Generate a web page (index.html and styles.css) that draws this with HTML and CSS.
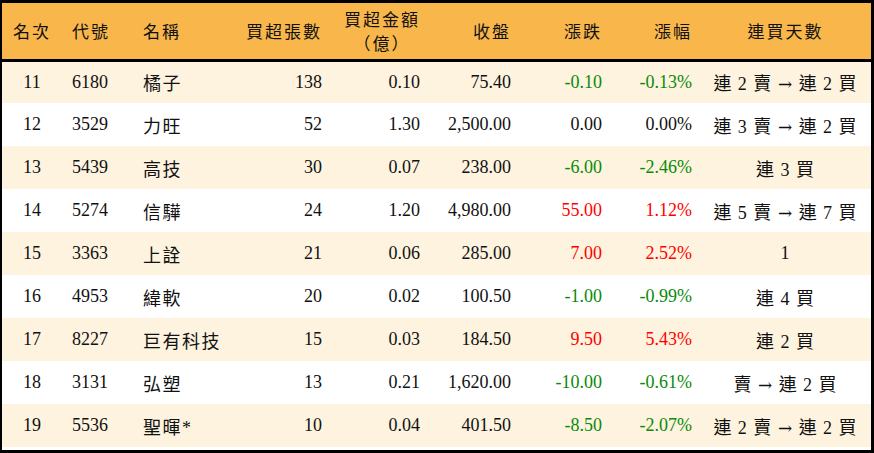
FILE: index.html
```html
<!DOCTYPE html>
<html lang="zh-Hant">
<head>
<meta charset="utf-8">
<title>買超排行</title>
<link rel="stylesheet" href="styles.css">
</head>
<body>
<div class="frame">
<table class="rank">
  <colgroup>
    <col class="c1"><col class="c2"><col class="c3"><col class="c4"><col class="c5"><col class="c6"><col class="c7"><col class="c8"><col class="c9">
  </colgroup>
  <thead>
    <tr>
      <th class="ctr">名次</th>
      <th class="lft code">代號</th>
      <th class="lft name">名稱</th>
      <th class="rgt">買超張數</th>
      <th class="rgt"><span class="two"><span class="ln">買超金額</span><span class="ln">（億）</span></span></th>
      <th class="rgt">收盤</th>
      <th class="rgt">漲跌</th>
      <th class="rgt">漲幅</th>
      <th class="ctr">連買天數</th>
    </tr>
  </thead>
  <tbody>
    <tr><td class="ctr">11</td><td class="lft code">6180</td><td class="lft name">橘子</td><td class="rgt">138</td><td class="rgt">0.10</td><td class="rgt">75.40</td><td class="rgt dn">-0.10</td><td class="rgt dn">-0.13%</td><td class="ctr days">連 2 賣 <span class="arr">→</span> 連 2 買</td></tr>
    <tr><td class="ctr">12</td><td class="lft code">3529</td><td class="lft name">力旺</td><td class="rgt">52</td><td class="rgt">1.30</td><td class="rgt">2,500.00</td><td class="rgt">0.00</td><td class="rgt">0.00%</td><td class="ctr days">連 3 賣 <span class="arr">→</span> 連 2 買</td></tr>
    <tr><td class="ctr">13</td><td class="lft code">5439</td><td class="lft name">高技</td><td class="rgt">30</td><td class="rgt">0.07</td><td class="rgt">238.00</td><td class="rgt dn">-6.00</td><td class="rgt dn">-2.46%</td><td class="ctr days">連 3 買</td></tr>
    <tr><td class="ctr">14</td><td class="lft code">5274</td><td class="lft name">信驊</td><td class="rgt">24</td><td class="rgt">1.20</td><td class="rgt">4,980.00</td><td class="rgt up">55.00</td><td class="rgt up">1.12%</td><td class="ctr days">連 5 賣 <span class="arr">→</span> 連 7 買</td></tr>
    <tr><td class="ctr">15</td><td class="lft code">3363</td><td class="lft name">上詮</td><td class="rgt">21</td><td class="rgt">0.06</td><td class="rgt">285.00</td><td class="rgt up">7.00</td><td class="rgt up">2.52%</td><td class="ctr days">1</td></tr>
    <tr><td class="ctr">16</td><td class="lft code">4953</td><td class="lft name">緯軟</td><td class="rgt">20</td><td class="rgt">0.02</td><td class="rgt">100.50</td><td class="rgt dn">-1.00</td><td class="rgt dn">-0.99%</td><td class="ctr days">連 4 買</td></tr>
    <tr><td class="ctr">17</td><td class="lft code">8227</td><td class="lft name">巨有科技</td><td class="rgt">15</td><td class="rgt">0.03</td><td class="rgt">184.50</td><td class="rgt up">9.50</td><td class="rgt up">5.43%</td><td class="ctr days">連 2 買</td></tr>
    <tr><td class="ctr">18</td><td class="lft code">3131</td><td class="lft name">弘塑</td><td class="rgt">13</td><td class="rgt">0.21</td><td class="rgt">1,620.00</td><td class="rgt dn">-10.00</td><td class="rgt dn">-0.61%</td><td class="ctr days">賣 <span class="arr">→</span> 連 2 買</td></tr>
    <tr><td class="ctr">19</td><td class="lft code">5536</td><td class="lft name">聖暉*</td><td class="rgt">10</td><td class="rgt">0.04</td><td class="rgt">401.50</td><td class="rgt dn">-8.50</td><td class="rgt dn">-2.07%</td><td class="ctr days">連 2 賣 <span class="arr">→</span> 連 2 買</td></tr>
  </tbody>
</table>
</div>
</body>
</html>
```

FILE: styles.css
```css
html, body {
  margin: 0;
  padding: 0;
  background: #ffffff;
}

.frame {
  width: 874px;
  height: 453px;
  box-sizing: border-box;
  border-top: 3px solid #000;
  border-left: 2px solid #000;
  border-right: 3px solid #000;
  border-bottom: 3px solid #000;
  overflow: hidden;
}

.rank {
  width: 869px;
  border-collapse: collapse;
  table-layout: fixed;
  font-family: "Liberation Serif", "Noto Sans CJK TC", serif;
  font-size: 18px;
  color: #111;
}

.c1 { width: 60px; }
.c2 { width: 68px; }
.c3 { width: 100px; }
.c4 { width: 100px; }
.c5 { width: 98px; }
.c6 { width: 91px; }
.c7 { width: 91px; }
.c8 { width: 90px; }
.c9 { width: 171px; }

.rank thead tr {
  background: #f9b74b;
  height: 57px;
}

.rank th {
  font-weight: 400;
  font-family: "Noto Sans CJK TC", serif;
  font-size: 17px;
  letter-spacing: 2px;
  padding: 0;
  border-bottom: 3px solid #000;
  white-space: nowrap;
  line-height: 22px;
}

.rank th.rgt {
  padding-right: 6px;
}

.two {
  display: inline-flex;
  flex-direction: column;
  align-items: center;
  gap: 2px;
  margin-top: -2px;
}

.ln {
  display: block;
  line-height: 22px;
  height: 22px;
}

.rank tbody tr {
  height: 43px;
}

.rank tbody tr:nth-child(odd) {
  background: #fdf3df;
}

.rank td {
  padding: 0;
  white-space: nowrap;
}

.ctr { text-align: center; }
.lft { text-align: left; }
.rgt { text-align: right; padding-right: 8px !important; }

.code { padding-left: 10px !important; }
.name { padding-left: 13px !important; letter-spacing: 1.5px; }

.days { letter-spacing: 1px; }

.arr {
  font-family: "DejaVu Serif", serif;
  font-size: 17px;
}

.up { color: #ff0000; }
.dn { color: #0a8a0a; }
```
